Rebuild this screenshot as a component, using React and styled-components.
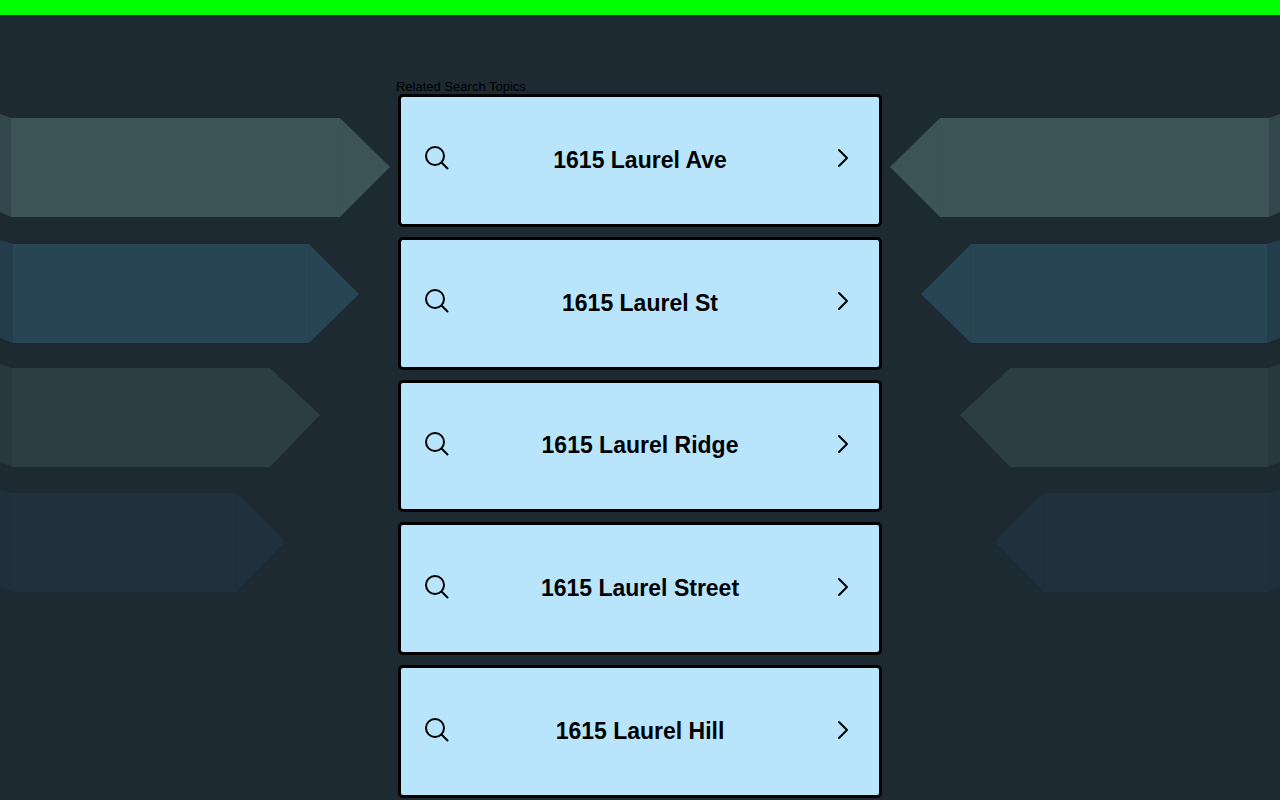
import React from 'react';
import styled, { createGlobalStyle } from 'styled-components';

const GlobalStyle = createGlobalStyle`
    *{
        box-sizing: border-box;
    }
    body{
        margin: 0;
        background: #1e2a32;
        font-family: Arial, "Liberation Sans", sans-serif;
        color: black;
    }
`

const TopBar = styled.div`
    height: 15px;
    background: #00ff00;
`

const Layout = styled.div`
    display: grid;
    grid-template-columns: minmax(0, 1fr) minmax(0, 488px) minmax(0, 1fr);
    overflow: hidden;
`

const Ribbons = styled.svg`
    display: block;
    width: 390px;
    height: 500px;
    margin-top: 85px;
    justify-self: ${p => p.$mirrored ? 'end' : 'start'};
    transform: ${p => p.$mirrored ? 'scaleX(-1)' : 'none'};
`

const Related = styled.main`
    padding-top: 64px;
`

const Title = styled.h1`
    margin: 0;
    font-size: 13px;
    font-weight: normal;
    line-height: 15px;
`

const TopicList = styled.ul`
    display: grid;
    grid-auto-rows: 1fr;
    gap: 10px;
    min-height: 88vh;
    margin: 0;
    padding: 0 2px;
    list-style: none;
`

const TopicLink = styled.a`
    display: flex;
    align-items: center;
    height: 100%;
    padding: 0 24px;
    border: 3px solid black;
    border-radius: 5px;
    background: #b8e5fc;
    color: black;
    text-decoration: none;
    &:hover{
        background: #d3effd;
    }
`

const TopicName = styled.span`
    flex: 1;
    padding-bottom: 1px;
    font-size: 23px;
    font-weight: bold;
    line-height: 26px;
    text-align: center;
`

const Icon = styled.svg`
    flex: none;
    width: 24px;
    height: 24px;
    margin-bottom: 4px;
    fill: none;
    stroke: black;
    stroke-width: 2;
    stroke-linecap: round;
    stroke-linejoin: round;
`

const topics = [
    '1615 Laurel Ave',
    '1615 Laurel St',
    '1615 Laurel Ridge',
    '1615 Laurel Street',
    '1615 Laurel Hill',
]

// y: top edge, fold: where the side face ends, end: where the arrow head starts
const ribbons = [
    { y: 18, fold: 11, end: 340, tip: 390, mid: 49, face: '#3c5457', side: '#33474e', seam: '#385053' },
    { y: 144, fold: 13, end: 309, tip: 359, mid: 50, face: '#284553', side: '#243d4a', seam: '#26424f' },
    { y: 268, fold: 12, end: 270, tip: 320, mid: 47, face: '#2c3e44', side: '#27383f', seam: '#2c3e44' },
    { y: 393, fold: 12, end: 236, tip: 285, mid: 49, face: '#20313d', side: '#1f2f3b', seam: '#1f2f3a' },
]

const RibbonArt = ({ mirrored }) => (
    <Ribbons $mirrored={mirrored} viewBox="0 0 390 500" aria-hidden="true">
        {ribbons.map(({ y, fold, end, tip, mid, face, side, seam }) => (
            <g key={y}>
                <path fill={side} d={`M0 ${y - 4}L${fold} ${y}V${y + 99}L0 ${y + 94}Z`} />
                <path fill={face} d={`M${fold} ${y}H${end}L${tip} ${y + mid}L${end} ${y + 99}H${fold}Z`} />
                <path stroke={seam} d={`M${end + 0.5} ${y + 1}V${y + 98}`} />
            </g>
        ))}
    </Ribbons>
)

const App = () => {
    return (
        <>
            <GlobalStyle />
            <TopBar />
            <Layout>
                <RibbonArt />
                <Related>
                    <Title>Related Search Topics</Title>
                    <TopicList>
                        {topics.map((topic) => (
                            <li key={topic}>
                                <TopicLink href="#">
                                    <Icon viewBox="0 0 24 24" aria-hidden="true">
                                        <circle cx="10" cy="10" r="9" />
                                        <path d="M16.5 16.5L22.5 22.5" />
                                    </Icon>
                                    <TopicName>{topic}</TopicName>
                                    <Icon viewBox="0 0 24 24" aria-hidden="true">
                                        <path d="M8 4L16 12L8 20" />
                                    </Icon>
                                </TopicLink>
                            </li>
                        ))}
                    </TopicList>
                </Related>
                <RibbonArt mirrored />
            </Layout>
        </>
    )
}

export default App;
